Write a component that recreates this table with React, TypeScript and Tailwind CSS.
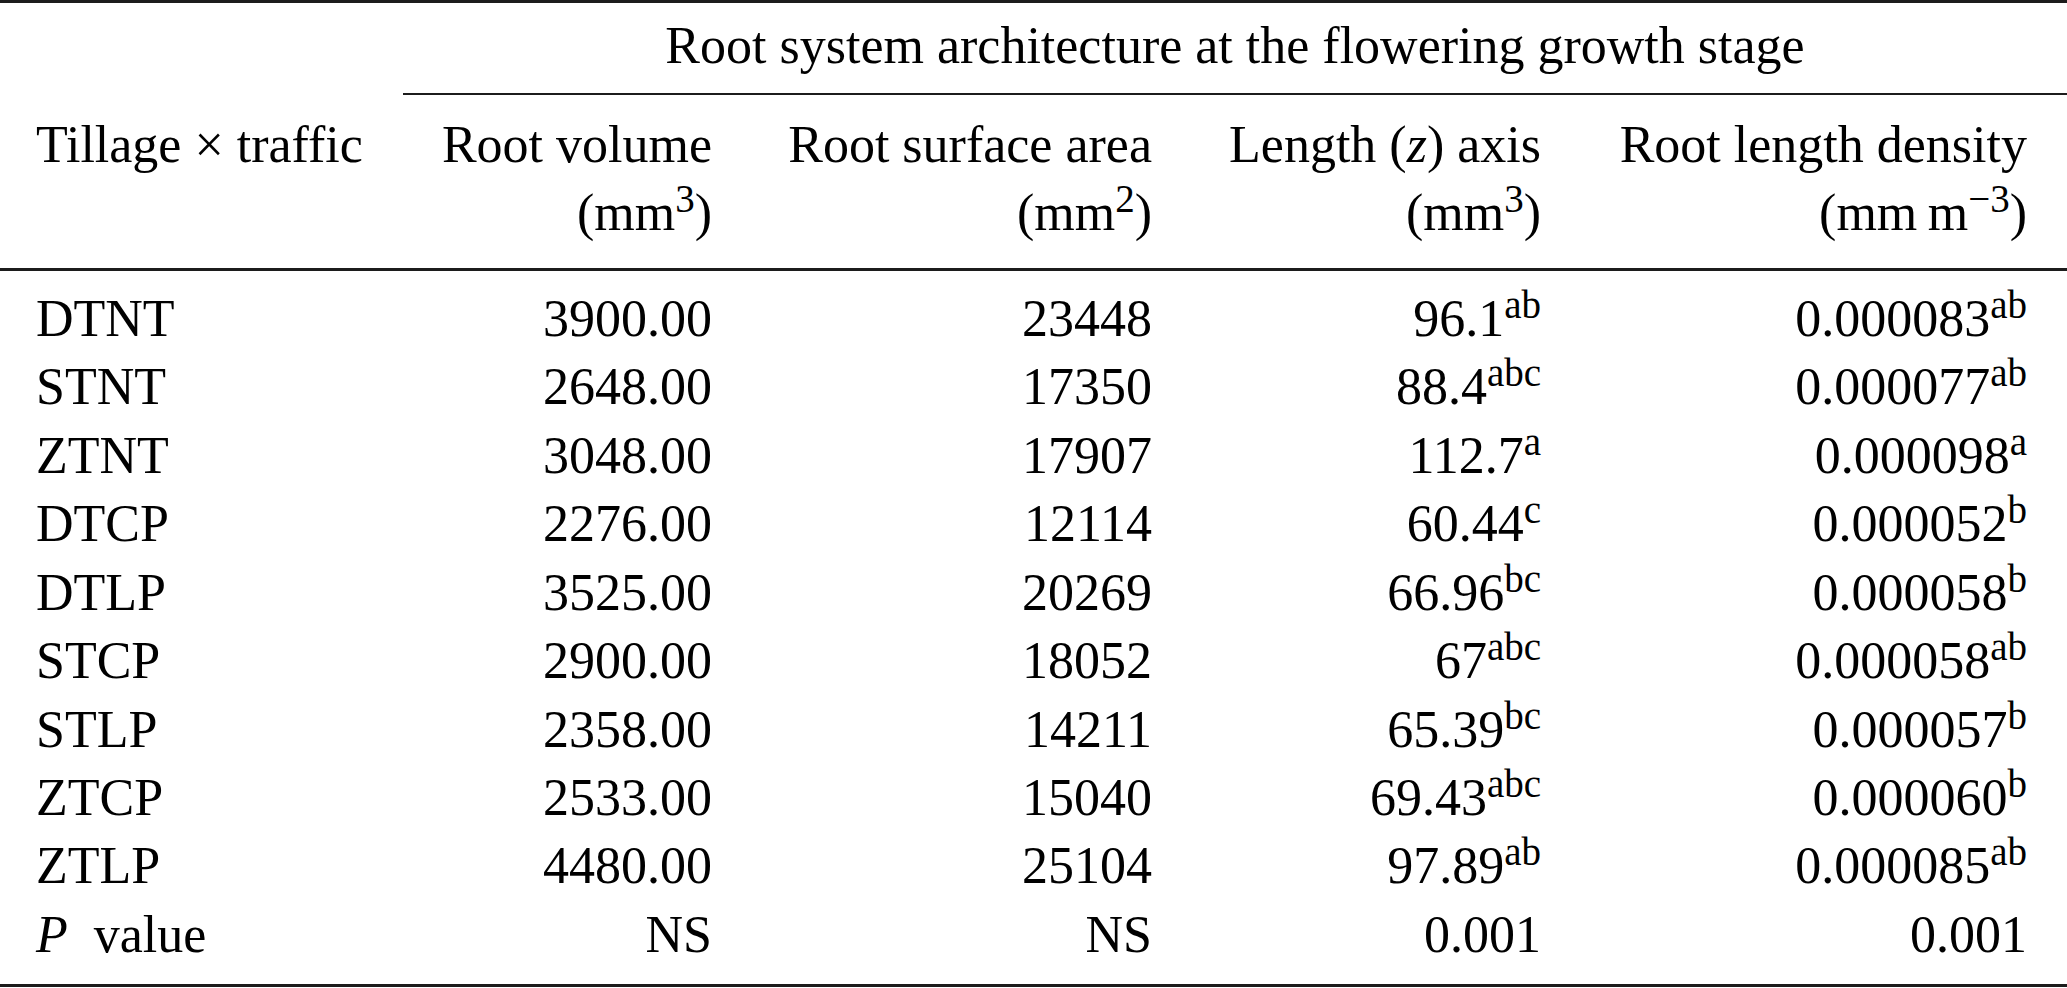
import React from "react";

type Row = {
  name: React.ReactNode;
  vol: string;
  area: string;
  len: string;
  lenSup?: string;
  dens: string;
  densSup?: string;
};

const rows: Row[] = [
  { name: "DTNT", vol: "3900.00", area: "23448", len: "96.1", lenSup: "ab", dens: "0.000083", densSup: "ab" },
  { name: "STNT", vol: "2648.00", area: "17350", len: "88.4", lenSup: "abc", dens: "0.000077", densSup: "ab" },
  { name: "ZTNT", vol: "3048.00", area: "17907", len: "112.7", lenSup: "a", dens: "0.000098", densSup: "a" },
  { name: "DTCP", vol: "2276.00", area: "12114", len: "60.44", lenSup: "c", dens: "0.000052", densSup: "b" },
  { name: "DTLP", vol: "3525.00", area: "20269", len: "66.96", lenSup: "bc", dens: "0.000058", densSup: "b" },
  { name: "STCP", vol: "2900.00", area: "18052", len: "67", lenSup: "abc", dens: "0.000058", densSup: "ab" },
  { name: "STLP", vol: "2358.00", area: "14211", len: "65.39", lenSup: "bc", dens: "0.000057", densSup: "b" },
  { name: "ZTCP", vol: "2533.00", area: "15040", len: "69.43", lenSup: "abc", dens: "0.000060", densSup: "b" },
  { name: "ZTLP", vol: "4480.00", area: "25104", len: "97.89", lenSup: "ab", dens: "0.000085", densSup: "ab" },
  {
    name: (
      <>
        <i>P</i>&nbsp; value
      </>
    ),
    vol: "NS",
    area: "NS",
    len: "0.001",
    dens: "0.001",
  },
];

function Sup({ children }: { children: React.ReactNode }) {
  return <sup className="text-[39px] top-[-18px]">{children}</sup>;
}

const grid = "grid grid-cols-[367px_309px_440px_389px_486px] pl-[36px]";

export default function App() {
  return (
    <div className="w-[2067px] bg-white text-black font-['Liberation_Serif','Times_New_Roman',serif] text-[52px] leading-[68.45px] border-t-[3px] border-b-[3px] border-[#1c1c1c]">
      {/* spanning header */}
      <div className="pt-[9px] pl-[403px]">
        <div className="text-center pb-[12.5px] border-b-2 border-[#1c1c1c]">
          Root system architecture at the flowering growth stage
        </div>
      </div>

      {/* column headers */}
      <div className={`${grid} pt-[16px] pb-[20px] border-b-[3px] border-[#1c1c1c]`}>
        <div>Tillage × traffic</div>
        <div className="text-right">
          Root volume
          <br />
          (mm<Sup>3</Sup>)
        </div>
        <div className="text-right">
          Root surface area
          <br />
          (mm<Sup>2</Sup>)
        </div>
        <div className="text-right">
          Length (<i>z</i>) axis
          <br />
          (mm<Sup>3</Sup>)
        </div>
        <div className="text-right">
          Root length density
          <br />
          (mm&#8201;m<Sup>−3</Sup>)
        </div>
      </div>

      {/* body */}
      <div className="pt-[14px] pb-[14.5px]">
        {rows.map((r, i) => (
          <div key={i} className={grid}>
            <div>{r.name}</div>
            <div className="text-right">{r.vol}</div>
            <div className="text-right">{r.area}</div>
            <div className="text-right">
              {r.len}
              {r.lenSup && <Sup>{r.lenSup}</Sup>}
            </div>
            <div className="text-right">
              {r.dens}
              {r.densSup && <Sup>{r.densSup}</Sup>}
            </div>
          </div>
        ))}
      </div>
    </div>
  );
}
